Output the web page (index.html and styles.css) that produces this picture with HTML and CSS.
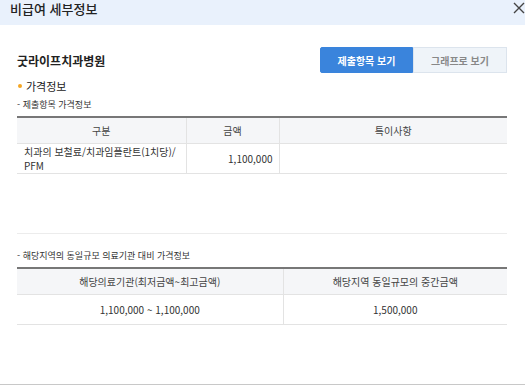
FILE: index.html
```html
<!DOCTYPE html>
<html lang="ko">
<head>
<meta charset="UTF-8">
<title>비급여 세부정보</title>
<link rel="stylesheet" href="styles.css">
</head>
<body>

<div class="popup">
    <div class="popup-head">
        <h2>비급여 세부정보</h2>
        <button class="close" aria-label="닫기">
            <svg width="12" height="12" viewBox="0 0 12 12"><path d="M1 1L11 11M11 1L1 11" stroke="#444" stroke-width="1.4" fill="none"/></svg>
        </button>
    </div>

    <div class="popup-body">
        <div class="top-row">
            <h3 class="hosp">굿라이프치과병원</h3>
            <div class="tabs">
                <button class="tab on">제출항목 보기</button>
                <button class="tab">그래프로 보기</button>
            </div>
        </div>

        <p class="dot-title">가격정보</p>
        <p class="sub-title">- 제출항목 가격정보</p>
        <table class="tbl">
            <colgroup><col style="width:169px"><col style="width:93px"><col></colgroup>
            <thead>
                <tr><th>구분</th><th>금액</th><th>특이사항</th></tr>
            </thead>
            <tbody>
                <tr>
                    <td class="left">치과의 보철료/치과임플란트(1치당)/<br>PFM</td>
                    <td class="right">1,100,000</td>
                    <td></td>
                </tr>
            </tbody>
        </table>
        <div class="empty-area"></div>

        <p class="sub-title sub2">- 해당지역의 동일규모 의료기관 대비 가격정보</p>
        <table class="tbl">
            <colgroup><col style="width:266px"><col></colgroup>
            <thead>
                <tr><th>해당의료기관(최저금액~최고금액)</th><th>해당지역 동일규모의 중간금액</th></tr>
            </thead>
            <tbody>
                <tr><td>1,100,000 ~ 1,100,000</td><td>1,500,000</td></tr>
            </tbody>
        </table>
    </div>
</div>

</body>
</html>
```

FILE: styles.css
```css
body {
    margin: 0;
    font-family: "Noto Sans CJK KR", "Noto Sans", sans-serif;
    color: #333;
    background: #fff;
}
.popup {
    height: 385px;
    box-sizing: border-box;
    border-bottom: 1px solid #c8c8c8;
    overflow: hidden;
}
.popup-head {
    height: 25px;
    background: #e9f1fc;
    display: flex;
    justify-content: space-between;
    align-items: flex-start;
    padding: 0 0 0 10px;
}
.popup-head h2 {
    margin: 0;
    font-size: 13px;
    font-weight: 500;
    line-height: 18px;
    color: #222;
}
.close {
    border: none;
    background: none;
    padding: 0;
    margin: 2px 0 0;
    width: 13px;
    height: 12px;
    overflow: hidden;
    cursor: pointer;
}
.popup-body {
    padding: 0 18px 0 17px;
}
.top-row {
    display: flex;
    justify-content: space-between;
    align-items: center;
    margin-top: 22px;
}
.hosp {
    margin: 0;
    font-size: 12px;
    font-weight: 700;
    color: #222;
}
.tabs {
    display: flex;
}
.tab {
    width: 94px;
    height: 26px;
    font-family: inherit;
    font-size: 10px;
    font-weight: 700;
    border: 1px solid #dce4ed;
    background: #eff4f9;
    color: #888;
    padding: 0;
}
.tab.on {
    width: 93px;
    background: #3a84dc;
    border-color: #3a84dc;
    color: #fff;
    border-radius: 2px 0 0 2px;
}
.dot-title {
    margin: 5px 0 0 9px;
    font-size: 11px;
    line-height: 16px;
    color: #222;
    position: relative;
}
.dot-title::before {
    content: "";
    position: absolute;
    left: -8px;
    top: 6px;
    width: 4px;
    height: 4px;
    border-radius: 50%;
    background: #f5a623;
}
.sub-title {
    margin: 4px 0 0;
    font-size: 9px;
    line-height: 14px;
    color: #333;
}
.sub2 {
    margin-top: 15px;
}
.tbl {
    width: 100%;
    border-collapse: collapse;
    table-layout: fixed;
    border-top: 2px solid #777;
    margin-top: 4px;
    font-size: 10px;
}
.tbl th {
    height: 25px;
    padding: 0;
    background: #f5f6f8;
    font-weight: 400;
    color: #444;
    border-bottom: 1px solid #e3e3e3;
}
.tbl td {
    height: 29px;
    padding: 0 6px;
    text-align: center;
    line-height: 14px;
    border-bottom: 1px solid #e3e3e3;
    color: #333;
}
.tbl th + th, .tbl td + td {
    border-left: 1px solid #e3e3e3;
}
.tbl td.left {
    text-align: left;
    padding-left: 7px;
}
.tbl td.right {
    text-align: right;
}
.empty-area {
    height: 59px;
    border-bottom: 1px solid #ececec;
}
```
